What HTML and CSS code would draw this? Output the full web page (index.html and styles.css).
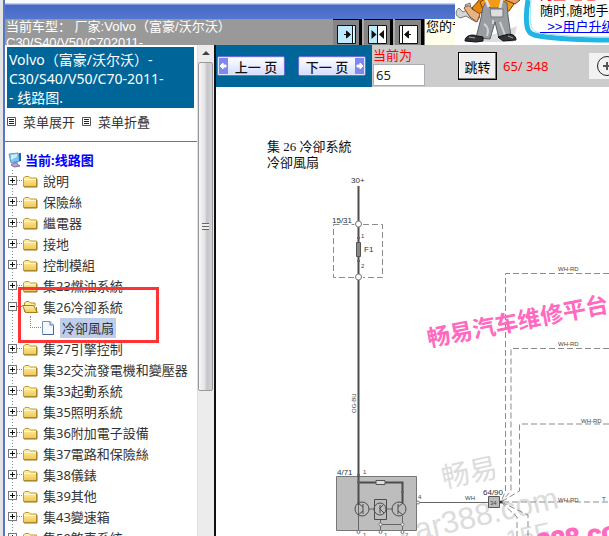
FILE: index.html
```html
<!DOCTYPE html>
<html lang="zh-CN">
<head>
<meta charset="utf-8">
<title>Volvo 线路图</title>
<link rel="stylesheet" href="styles.css">
</head>
<body>
<svg class="defs" aria-hidden="true">
  <defs>
    <linearGradient id="gold" x1="0" y1="0" x2="0" y2="1"><stop offset="0" stop-color="#fff3ae"/><stop offset="1" stop-color="#f0c654"/></linearGradient>
    <symbol id="folder" viewBox="0 0 16 14"><path d="M1.500 12.500V4l1.500-1.500h4L8.500 4h6v8.500z" fill="url(#gold)" stroke="#c69b2f"/><path d="M2 5.500h12" stroke="#fff8cf"/><path d="M2 13h13V5" fill="none" stroke="#94762a"/></symbol>
    <symbol id="folder-open" viewBox="0 0 16 14"><path d="M2.500 12V3L4 1.500h3L8.500 3H13v3" fill="#fff0a0" stroke="#b58b22"/><path d="M.5 5.500h11l4 7H3.500z" fill="url(#gold)" stroke="#a37c1c"/><path d="M14.500 7v5" stroke="#a37c1c"/></symbol>
    <symbol id="page" viewBox="0 0 12 14"><path d="M.5.5h7.500l3.500 3.500v9.500H.5z" fill="#f4f9ff" stroke="#7894bd"/><path d="M8 .5V4h3.500" fill="#d4e4fa" stroke="#5f7fae"/><path d="M1 13.500h10.500V5" fill="none" stroke="#47648f"/></symbol>
    <symbol id="list" viewBox="0 0 9 9"><path d="M.5.5h8v8h-8z" fill="#fff" stroke="#555"/><path d="M2 2.500h5M2 4.500h5M2 6.500h5" stroke="#222"/></symbol>
  </defs>
</svg>
<header class="top">
  <div class="top-main">
    <div class="titlebar"></div>
    <div class="infobar">
      <div class="car">当前车型： 厂家:Volvo（富豪/沃尔沃）<br>C30/S40/V50/C702011-</div>
      <div class="frames">
        <button aria-label="展开左栏"><svg width="20" height="20"><path d="M.5.5h18v18H.5z" fill="#bdeaff" stroke="#111"/><path d="M15.500 1v17" stroke="#111"/><path d="M16.500 1v17" stroke="#fff"/><path d="M7 9.500h4M9.500 6l4 3.500-4 3.500z" fill="#111" stroke="#111"/></svg></button>
        <button aria-label="平分"><svg width="20" height="20"><path d="M.5.5h18v18H.5z" fill="#fff" stroke="#111"/><path d="M1 1h8v17H1z" fill="#bdeaff"/><path d="M9.500 1v17" stroke="#111"/><path d="M3.500 5l5 4.500-5 4.500zM16 5l-5 4.500 5 4.500z" fill="#111"/></svg></button>
        <button aria-label="展开右栏"><svg width="20" height="20"><path d="M.5.5h18v18H.5z" fill="#fff" stroke="#111"/><path d="M3.500 1v17" stroke="#111"/><path d="M8 9.500h4M9.500 6l-4 3.500 4 3.500z" fill="#111" stroke="#111"/></svg></button>
      </div>
      <div class="notice">您的专</div>
    </div>
  </div>
  <div class="promo">
    <svg class="mechanic" viewBox="0 0 66 45" role="img" aria-label="维修工">
      <path d="M14 42h44l4-16-10 4z" fill="#bbb" opacity=".5"/>
      <path d="M4 8c-4 3-4 8 1 10l6-2 10 6 4-5-9-8-1-6-5 2 2 5-4 2z" fill="#d5d5d5" stroke="#777"/>
      <path d="M17 8l8-9 6 2-1 10-7 3z" fill="#e8850c" stroke="#613600"/>
      <path d="M25 2l5-3h23l6 5-5 7-11 1H29z" fill="#f39a17" stroke="#704000"/>
      <path d="M50 0l10 4 5-4v-2H50z" fill="#e9a064" stroke="#704000"/>
      <path d="M9 8c2-3 7-3 8 1l8 5-3 8-7-5z" fill="#e6b382" stroke="#805030"/>
      <path d="M28 7l3-5 4 6h11l2-7 4 2 1 13 3 20-12 2-4-16-5 17-14-1 5-20z" fill="#999ca0" stroke="#5d6064"/>
      <path d="M35 9h13v8H36z" fill="#dcdee1" stroke="#777"/>
      <path d="M29 24c4 2 5 7 3 12M45 22l5 13M38 20v4" fill="none" stroke="#d0d2d5" stroke-width="2"/>
      <path d="M31 0l3 7M47 0l-2 8" stroke="#dfe1e4" stroke-width="3"/>
      <path d="M10 41c0-6 8-7 12-5l6 1v4l-7 1zM43 37l7-2c6-2 11 0 11 5l-13 1z" fill="#303236" stroke="#111"/>
      <path d="M14 37l6 1M53 36l5 2" stroke="#aaa"/>
    </svg>
    <div class="bubble">
      <svg class="bubble-line" viewBox="0 0 88 45" aria-hidden="true"><path d="M7 0C5 12 5 20 6 26c1 7 5 9 12 10 20 3 45 4 71 4" fill="none" stroke="#22b4e3" stroke-width="5"/><path d="M10 0c-1 12-1 20 0 25 1 5 4 7 9 8 20 3 45 4 69 4" fill="none" stroke="#9be1f5"/></svg>
      <div class="bubble-text"><b>阿里 旺旺</b><span>随时,随地手机</span><a href="#">&nbsp; &gt;&gt;用户升级</a></div>
    </div>
  </div>
</header>
<div class="work">
  <aside class="side">
    <div class="side-body">
      <h1>Volvo（富豪/沃尔沃）-<br>C30/S40/V50/C70-2011-<br>- 线路图.</h1>
      <div class="menu-tools">
        <button><svg width="9" height="9"><use href="#list"/></svg>菜单展开</button>
        <button><svg width="9" height="9"><use href="#list"/></svg>菜单折叠</button>
      </div>
      <div class="root"><svg width="14" height="16"><path d="M1 2l9-1 2 8-9 2z" fill="#70c6f7" stroke="#7d98b5"/><path d="M3 3l6-1v3L3 8z" fill="#c7efff"/><path d="M6 11l3-1v2l3 2-6 1-3-2z" fill="#aaa4cf" stroke="#7772a4"/><path d="M12 1v8" stroke="#2562b0" stroke-width="2"/></svg>当前:线路图</div>
      <ul class="tree">
        <li><div class="row"><button class="tog plus" aria-label="展开"></button><svg class="folder"><use href="#folder"/></svg><a href="#">說明</a></div></li>
        <li><div class="row"><button class="tog plus" aria-label="展开"></button><svg class="folder"><use href="#folder"/></svg><a href="#">保險絲</a></div></li>
        <li><div class="row"><button class="tog plus" aria-label="展开"></button><svg class="folder"><use href="#folder"/></svg><a href="#">繼電器</a></div></li>
        <li><div class="row"><button class="tog plus" aria-label="展开"></button><svg class="folder"><use href="#folder"/></svg><a href="#">接地</a></div></li>
        <li><div class="row"><button class="tog plus" aria-label="展开"></button><svg class="folder"><use href="#folder"/></svg><a href="#">控制模組</a></div></li>
        <li><div class="row"><button class="tog plus" aria-label="展开"></button><svg class="folder"><use href="#folder"/></svg><a href="#">集23燃油系統</a></div></li>
        <li class="marked"><div class="row"><button class="tog" aria-label="折叠"></button><svg class="folder"><use href="#folder-open"/></svg><a href="#">集26冷卻系統</a></div>
          <ul><li class="leaf"><svg width="12" height="14"><use href="#page"/></svg><a href="#" class="current">冷卻風扇</a></li></ul></li>
        <li><div class="row"><button class="tog plus" aria-label="展开"></button><svg class="folder"><use href="#folder"/></svg><a href="#">集27引擎控制</a></div></li>
        <li><div class="row"><button class="tog plus" aria-label="展开"></button><svg class="folder"><use href="#folder"/></svg><a href="#">集32交流發電機和變壓器</a></div></li>
        <li><div class="row"><button class="tog plus" aria-label="展开"></button><svg class="folder"><use href="#folder"/></svg><a href="#">集33起動系統</a></div></li>
        <li><div class="row"><button class="tog plus" aria-label="展开"></button><svg class="folder"><use href="#folder"/></svg><a href="#">集35照明系統</a></div></li>
        <li><div class="row"><button class="tog plus" aria-label="展开"></button><svg class="folder"><use href="#folder"/></svg><a href="#">集36附加電子設備</a></div></li>
        <li><div class="row"><button class="tog plus" aria-label="展开"></button><svg class="folder"><use href="#folder"/></svg><a href="#">集37電路和保險絲</a></div></li>
        <li><div class="row"><button class="tog plus" aria-label="展开"></button><svg class="folder"><use href="#folder"/></svg><a href="#">集38儀錶</a></div></li>
        <li><div class="row"><button class="tog plus" aria-label="展开"></button><svg class="folder"><use href="#folder"/></svg><a href="#">集39其他</a></div></li>
        <li><div class="row"><button class="tog plus" aria-label="展开"></button><svg class="folder"><use href="#folder"/></svg><a href="#">集43變速箱</a></div></li>
        <li><div class="row"><button class="tog plus" aria-label="展开"></button><svg class="folder"><use href="#folder"/></svg><a href="#">集59煞車系統</a></div></li>
      </ul>
    </div>
    <div class="scroll" aria-hidden="true">
      <svg width="16" height="17"><path d="M4 10l4-4 4 4z" fill="#444"/></svg>
      <div class="thumb"><i></i></div>
    </div>
  </aside>
  <main class="main">
    <div class="toolbar">
      <div class="pager">
        <button class="page-btn"><svg width="10" height="16"><path d="M0 0h10v16H0z" fill="#7f88ee"/><path d="M2 8l3-3v2h3v2H5v2z" fill="#fff" stroke="#fff"/></svg><span>上一 页</span></button>
        <button class="page-btn"><span>下一 页</span><svg width="10" height="16"><path d="M0 0h10v16H0z" fill="#7f88ee"/><path d="M8 8L5 5v2H2v2h3v2z" fill="#fff" stroke="#fff"/></svg></button>
      </div>
      <form class="goto">
        <div class="field"><label for="pg">当前为</label><input id="pg" value="65"></div>
        <button type="button" class="jump">跳转</button>
        <span class="count">65/ 348</span>
        <button type="button" class="zoom" aria-label="放大"><svg width="20" height="26"><circle cx="18" cy="13" r="9.500" fill="none" stroke="#222"/><path d="M14 13h8M18 9v8" stroke="#555" stroke-width="2"/></svg></button>
      </form>
    </div>
    <svg class="diagram" viewBox="216 87 393 449" preserveAspectRatio="xMinYMin slice" role="img" aria-label="冷卻風扇">
      <g class="watermark">
        <text transform="translate(444 488) rotate(-12)" font-size="28">畅易</text>
        <text transform="translate(402 544) rotate(-13)" font-size="31">car388.com</text>
        <text transform="translate(508 549) rotate(-12)" font-size="26">15F</text>
      </g>
      <g class="doc-title"><text x="267" y="151">集 26 冷卻系統</text><text x="267" y="167">冷卻風扇</text></g>
      <path d="M336.500 476.500h80v54h-80z" fill="#bdbdbd" stroke="#777"/>
      <g fill="none" stroke="#4c4c4c">
        <path d="M358.500 186v319M358.500 482.500h44V503" stroke-width="2"/>
        <path d="M369 509h5M386 509h7M358.500 505v27M380.500 519v13M380.500 524.500h22M402.500 516v16M419 502.500h69" stroke="#666"/>
        <path d="M374.500 499.500h12v20h-12z"/>
        <circle cx="362" cy="509" r="7"/><circle cx="380" cy="509" r="6"/><circle cx="399" cy="509" r="7"/>
        <path d="M363 504v10M358 503l5 4M363 511l-5 4M380 505v8M379 509l4-4M380 509l4 4M398 504v10M403 503l-5 4M398 511l5 4" stroke-width="1"/>
      </g>
      <g fill="#fff" stroke="#777"><circle cx="358.500" cy="224" r="3"/><circle cx="358.500" cy="277" r="3"/><circle cx="418" cy="502.500" r="1.500"/><circle cx="358.500" cy="532" r="1.500"/><circle cx="380.500" cy="532" r="1.500"/><circle cx="402.500" cy="532" r="1.500"/><circle cx="380.500" cy="524.500" r="1.500"/><circle cx="402.500" cy="524.500" r="1.500"/></g>
      <g fill="#888" stroke="#555"><path d="M356.500 242.500h4v14h-4z"/><circle cx="358.500" cy="238" r="1"/><circle cx="358.500" cy="261" r="1"/><path d="M376 480.500h9v4h-9z" fill="#ddd"/><circle cx="358.500" cy="475" r="1"/><circle cx="358.500" cy="482" r="1"/><circle cx="402.500" cy="492" r="1"/><path d="M488.500 496.500h11v11h-11z" fill="#bbb"/></g>
      <g fill="none" stroke="#8b8b8b" stroke-dasharray="6 3">
        <path d="M333.500 224.500h21M363 224.500h19.500v53H363M354 277.500h-20.500v-53"/>
        <path d="M609 273.500H505.500V491L501 502M609 348.500h-98V491L501 502M609 424h-89.500v67L501 502H609M501 502l16 15v19M501 502l27 13v21"/>
      </g>
      <circle cx="501" cy="502" r="1.500" fill="#333"/>
      <g class="mid"><text x="351" y="183">30+</text><text x="332" y="223">15/31</text><text x="364" y="252">F1</text><text x="337" y="475">4/71</text><text x="483" y="495">64/90</text></g>
      <g class="tiny"><text x="361" y="238">1</text><text x="361" y="268">2</text><text x="363" y="474">1</text><text x="418" y="499">4</text><text x="465" y="500">WH</text><text x="490" y="505">34</text><text x="558" y="271">WH-RD</text><text x="558" y="346">WH-RD</text><text x="581" y="423">WH-RD</text><text x="558" y="502">WH-RD</text><text x="602" y="501">T</text><text x="363" y="537">1</text><text x="384" y="537">1</text><text x="405" y="537">2</text><text transform="translate(356 413) rotate(-90)">OG-BU</text></g>
      <g class="pink"><text transform="translate(429 347) rotate(-11)" font-size="23">畅易汽车维修平台</text><text class="site" transform="translate(500 558) rotate(-9)" font-size="26">car388.com</text></g>
    </svg>
  </main>
</div>
</body>
</html>
```

FILE: styles.css
```css
* { box-sizing: border-box; }
body {
  margin: 0;
  height: 100vh;
  overflow: hidden;
  display: flex;
  flex-direction: column;
  padding-left: 5px;
  background: linear-gradient(90deg, #e4e4e4 0 3px, #5677c9 3px 5px, #fff 5px);
  font-family: "Noto Sans", "Noto Sans CJK SC", sans-serif;
  font-size: 13px;
  color: #333;
}
button { font: inherit; color: inherit; padding: 0; border: 0; background: none; }
svg { display: block; flex: none; }
a { color: inherit; text-decoration: none; }
.defs { position: absolute; width: 0; height: 0; }

.top { display: flex; height: 45px; flex: none; overflow: hidden; }
.top-main { flex: 1; min-width: 0; }
.titlebar {
  height: 19px;
  background: linear-gradient(#fafbff 0 3px, #c3cff0 3px 4px, #4669c4 5px, #5277d0 19px);
}
.infobar {
  display: flex;
  height: 26px;
  background: #999;
  font-family: "Liberation Sans", "Noto Sans CJK SC", sans-serif;
  line-height: 16px;
}
.car { flex: 1; padding-left: 1px; color: #fff; white-space: nowrap; overflow: hidden; }
.frames { display: flex; gap: 2px; background: #aaa; }
.frames button {
  width: 29px;
  padding: 5px 0 0 4px;
  border: solid #000;
  border-width: 1px 3px 0 0;
  background: #858585;
}
.notice { width: 31px; padding-left: 1px; background: #fffeea; color: #000; white-space: nowrap; overflow: hidden; border-left: 1px solid #777; }
.promo { display: flex; width: 154px; background: #fff; }
.mechanic { width: 66px; height: 45px; }
.bubble { position: relative; flex: 1; overflow: hidden; }
.bubble-line { width: 88px; height: 45px; }
.bubble-text {
  position: absolute;
  left: 19px;
  bottom: 10px;
  display: flex;
  flex-direction: column;
  line-height: 16px;
  white-space: nowrap;
  color: #000;
  font-family: "Liberation Sans", "Noto Sans CJK SC", sans-serif;
}
.bubble-text b { color: #f00; }
.bubble-text a { color: #00f; text-decoration: underline; }

.work { display: flex; flex: 1; min-height: 0; }
.side { display: flex; width: 211px; flex: none; border-right: 2px solid #111; background: #fff; }
.side-body { flex: 1; min-width: 0; overflow: hidden; padding-top: 2px; }
h1 {
  margin: 0 3px 0 2px;
  padding: 3px 2px;
  background: #069;
  color: #fff;
  font-size: 14px;
  font-weight: 400;
  line-height: 19px;
  height: 61px;
  white-space: nowrap;
}
.menu-tools { display: flex; gap: 7px; height: 34px; align-items: center; padding: 0 2px 6px; border-bottom: 1px solid #777; }
.menu-tools button { display: flex; align-items: center; gap: 7px; white-space: nowrap; }
.root { display: flex; align-items: center; gap: 3px; height: 28px; padding: 7px 0 0 3px; color: #00f; font-weight: 700; }
.tree, .tree ul { list-style: none; margin: 0; padding: 0; }
.tree { background: repeating-linear-gradient(#888 0 1px, #fff 1px 3px) 7px 0 / 1px 100% no-repeat; }
.row { display: flex; align-items: center; height: 21px; padding-left: 3px; white-space: nowrap; }
.tog {
  width: 9px;
  height: 9px;
  border: 1px solid #777;
  background: linear-gradient(#111, #111) center / 5px 1px no-repeat, #fff;
}
.plus {
  background: linear-gradient(#111, #111) center / 5px 1px no-repeat,
    linear-gradient(#111, #111) center / 1px 5px no-repeat, #fff;
}
.tog::after { content: ""; display: block; width: 5px; margin-left: 8px; border-top: 1px dotted #888; }
.folder { width: 16px; height: 14px; margin: 0 5px; }
.leaf { display: flex; align-items: center; height: 21px; padding-left: 25px; white-space: nowrap; }
.leaf::before { content: ""; width: 10px; height: 11px; margin: 0 1px 11px 0; border: dotted #888; border-width: 0 0 1px 1px; }
.current { margin-left: 6px; padding: 0 2px; line-height: 20px; background: #bdcdea; }
.marked { position: relative; }
.marked::after { content: ""; position: absolute; left: 13px; top: -9px; width: 135px; height: 50px; border: 3px solid #f33; }
.scroll { width: 17px; background: #ececec; border-left: 1px solid #ddd; }
.thumb {
  height: 329px;
  width: 15px;
  border: 1px solid #999;
  border-radius: 2px;
  background: linear-gradient(90deg, #f6f6f6, #e3e3e6 45%, #c4c4ca 60%, #d4d4d8);
  display: flex;
  align-items: center;
  justify-content: center;
}
.thumb i { width: 7px; height: 7px; background: repeating-linear-gradient(#666 0 1px, #eee 1px 3px); }

.main { flex: 1; min-width: 0; display: flex; flex-direction: column; background: #fff; }
.toolbar { display: flex; height: 42px; flex: none; background: #ccc; }
.pager { display: flex; align-items: center; gap: 13px; width: 156px; padding-left: 1px; background: #069; flex: none; }
.page-btn {
  display: flex;
  align-items: center;
  justify-content: space-between;
  width: 68px;
  height: 20px;
  border: 1px solid #6870d8;
  outline: 1px solid #dfe4ff;
  outline-offset: -2px;
  border-radius: 2px;
  background: linear-gradient(#fff, #d4dcff);
  color: #111;
}
.page-btn span { flex: 1; white-space: nowrap; font-weight: 500; }
.goto { display: flex; flex: 1; min-width: 0; overflow: hidden; align-items: center; margin: 0; color: #f00; }
.field { width: 54px; padding-left: 1px; flex: none; }
.field label { display: block; line-height: 17px; white-space: nowrap; }
.field input { display: block; width: 52px; height: 22px; padding: 0 2px; border: 1px solid #abadb3; font: 13px "Noto Sans", sans-serif; color: #222; background: #fff; }
.jump { width: 39px; height: 28px; margin-left: 32px; flex: none; border: 1px solid #000; box-shadow: inset -1px -1px #777, inset 1px 1px #fff; background: #f0f0f0; color: #000; }
.count { margin-left: 6px; flex: 1; white-space: nowrap; font: 13px "Noto Sans", sans-serif; }
.zoom { width: 20px; height: 26px; flex: none; background: #f2f2f2; overflow: hidden; }

.diagram { flex: 1; width: 100%; min-height: 0; font-family: "Liberation Sans", "Noto Sans CJK SC", sans-serif; }
.doc-title { font: 13px "Liberation Serif", "Noto Sans CJK TC", serif; fill: #111; }
.mid { font-size: 8px; fill: #333; }
.tiny { font-size: 6px; fill: #444; }
.watermark { fill: #dcdcdc; }
.pink { fill: #ff69c0; font-weight: 700; }
.site { stroke: #ff69c0; stroke-width: 1; }
```
